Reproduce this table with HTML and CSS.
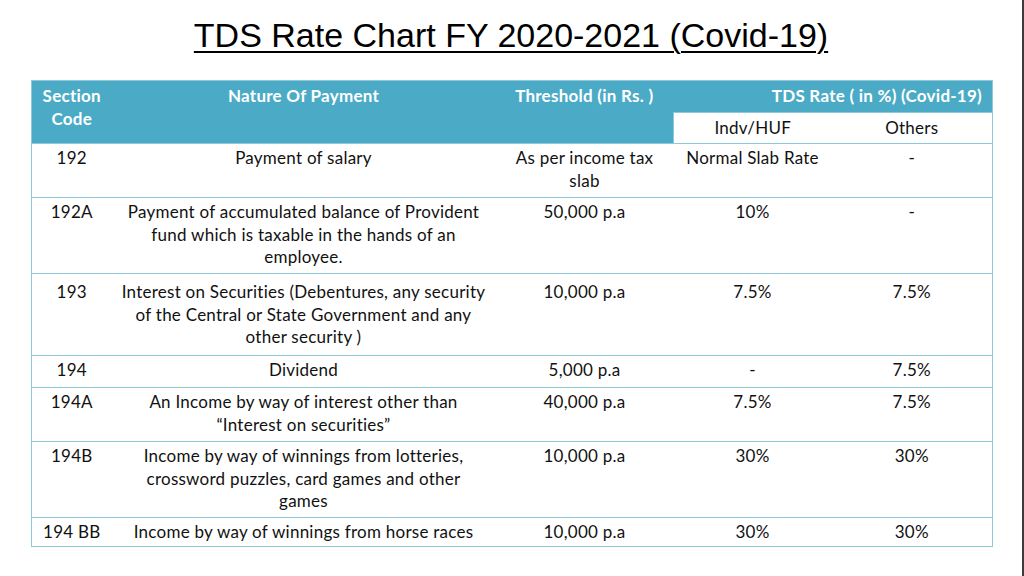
FILE: index.html
```html
<!DOCTYPE html>
<html lang="en">
<head>
<meta charset="utf-8">
<title>TDS Rate Chart FY 2020-2021 (Covid-19)</title>
<link rel="stylesheet" href="styles.css">
</head>
<body>
<div class="slide">
  <h1 class="title">TDS Rate Chart FY 2020-2021 (Covid-19)</h1>
  <table class="tds">
    <colgroup>
      <col class="c-code">
      <col class="c-nature">
      <col class="c-thr">
      <col class="c-indv">
      <col class="c-oth">
    </colgroup>
    <thead>
      <tr class="h1">
        <th rowspan="2" class="th-code">Section<br>Code</th>
        <th rowspan="2">Nature Of Payment</th>
        <th rowspan="2">Threshold (in Rs. )</th>
        <th colspan="2" class="th-rate">TDS Rate ( in %) (Covid-19)</th>
      </tr>
      <tr class="h2">
        <th class="sub sub-first">Indv/HUF</th>
        <th class="sub">Others</th>
      </tr>
    </thead>
    <tbody>
      <tr class="r2">
        <td>192</td>
        <td>Payment of salary</td>
        <td>As per income tax<br>slab</td>
        <td>Normal Slab Rate</td>
        <td>-</td>
      </tr>
      <tr class="r3">
        <td>192A</td>
        <td>Payment of accumulated balance of Provident<br>fund which is taxable in the hands of an<br>employee.</td>
        <td>50,000 p.a</td>
        <td>10%</td>
        <td>-</td>
      </tr>
      <tr class="r3b">
        <td>193</td>
        <td>Interest on Securities (Debentures, any security<br>of the Central or State Government and any<br>other security )</td>
        <td>10,000 p.a</td>
        <td>7.5%</td>
        <td>7.5%</td>
      </tr>
      <tr class="r1">
        <td>194</td>
        <td>Dividend</td>
        <td>5,000 p.a</td>
        <td>-</td>
        <td>7.5%</td>
      </tr>
      <tr class="r2">
        <td>194A</td>
        <td>An Income by way of interest other than<br>“Interest on securities”</td>
        <td>40,000 p.a</td>
        <td>7.5%</td>
        <td>7.5%</td>
      </tr>
      <tr class="r3">
        <td>194B</td>
        <td>Income by way of winnings from lotteries,<br>crossword puzzles, card games and other<br>games</td>
        <td>10,000 p.a</td>
        <td>30%</td>
        <td>30%</td>
      </tr>
      <tr class="r1s">
        <td>194 BB</td>
        <td>Income by way of winnings from horse races</td>
        <td>10,000 p.a</td>
        <td>30%</td>
        <td>30%</td>
      </tr>
    </tbody>
  </table>
</div>
</body>
</html>
```

FILE: styles.css
```css
html, body {
  margin: 0;
  padding: 0;
  background: #ffffff;
}

.slide {
  width: 1024px;
  height: 576px;
  box-sizing: border-box;
  border-right: 2px solid #3c3c3c;
  padding-top: 16px;
  overflow: hidden;
}

.title {
  margin: 0 0 25px 0;
  font-family: "Liberation Sans", Arial, sans-serif;
  font-weight: normal;
  font-size: 34px;
  line-height: 39px;
  color: #000000;
  text-align: center;
  text-decoration: underline;
  text-decoration-thickness: 2px;
  text-underline-offset: 4px;
}

.tds {
  margin-left: 31px;
  width: 961px;
  table-layout: fixed;
  border-collapse: collapse;
  font-family: Lato, "Liberation Sans", sans-serif;
  font-size: 17px;
  letter-spacing: 0.25px;
  line-height: 22.5px;
  color: #111111;
  border: 1px solid #8ccadb;
}

.c-code { width: 80px; }
.c-nature { width: 384px; }
.c-thr { width: 178px; }
.c-indv { width: 158px; }
.c-oth { width: 161px; }

.tds th {
  background: #4babc6;
  color: #ffffff;
  font-weight: bold;
  text-align: center;
  vertical-align: top;
  padding: 4px 4px 0 4px;
  white-space: nowrap;
}

.tds .h1 { height: 32px; }
.tds .h2 { height: 31px; }

.tds .th-rate {
  text-align: right;
  padding-right: 10px;
}

.tds th.sub {
  background: #ffffff;
  color: #111111;
  font-weight: normal;
  padding-top: 4px;
  border-top: 1px solid #8ccadb;
}

.tds th.sub-first {
  border-left: 1px solid #8ccadb;
}

.tds td {
  text-align: center;
  vertical-align: top;
  padding: 3px 4px 0 4px;
  white-space: nowrap;
  border-top: 1px solid #8ccadb;
}

.tds .r1 { height: 32px; }
.tds .r1s { height: 29px; }
.tds .r2 { height: 54px; }
.tds .r3 { height: 76px; }
.tds .r3b { height: 82px; }
.tds .r3b td { padding-top: 7px; }
```
